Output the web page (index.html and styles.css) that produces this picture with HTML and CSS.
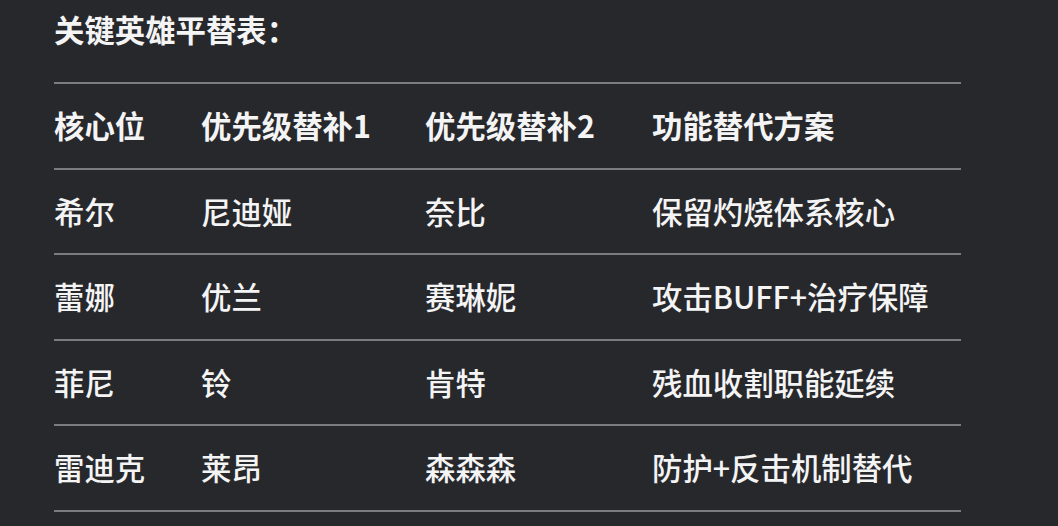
FILE: index.html
```html
<!DOCTYPE html>
<html lang="zh">
<head>
<meta charset="utf-8">
<link rel="stylesheet" href="styles.css">
</head>
<body>
<div class="doc">
  <p class="title">关键英雄平替表：</p>
  <table class="subs">
    <colgroup>
      <col class="c1"><col class="c2"><col class="c3"><col class="c4">
    </colgroup>
    <thead>
      <tr><th>核心位</th><th>优先级替补1</th><th>优先级替补2</th><th>功能替代方案</th></tr>
    </thead>
    <tbody>
      <tr><td>希尔</td><td>尼迪娅</td><td>奈比</td><td>保留灼烧体系核心</td></tr>
      <tr><td>蕾娜</td><td>优兰</td><td>赛琳妮</td><td>攻击BUFF+治疗保障</td></tr>
      <tr><td>菲尼</td><td>铃</td><td>肯特</td><td>残血收割职能延续</td></tr>
      <tr><td>雷迪克</td><td>莱昂</td><td>森森森</td><td>防护+反击机制替代</td></tr>
    </tbody>
  </table>
</div>
</body>
</html>
```
FILE: styles.css
```css
html, body {
  margin: 0;
  padding: 0;
  background: #27282c;
}
body {
  width: 1058px;
  height: 526px;
  overflow: hidden;
  color: #f4f4f5;
  font-family: "Noto Sans CJK SC", "Noto Sans", sans-serif;
}
.doc {
  padding: 7px 0 0 54px;
}
.title {
  margin: 0;
  font-size: 30.4px;
  line-height: 45px;
  font-weight: 700;
}
.subs {
  margin-top: 30px;
  width: 907px;
  table-layout: fixed;
  border-collapse: collapse;
  font-size: 30.4px;
  line-height: 45px;
}
.c1 { width: 147px; }
.c2 { width: 224px; }
.c3 { width: 227px; }
.c4 { width: 309px; }
.subs th, .subs td {
  padding: 19px 0 19.6px;
  text-align: left;
  white-space: nowrap;
  border-bottom: 2px solid #7b7c80;
}
.subs thead th {
  border-top: 2px solid #7b7c80;
  font-weight: 700;
}
.subs td {
  font-weight: 500;
}
```
